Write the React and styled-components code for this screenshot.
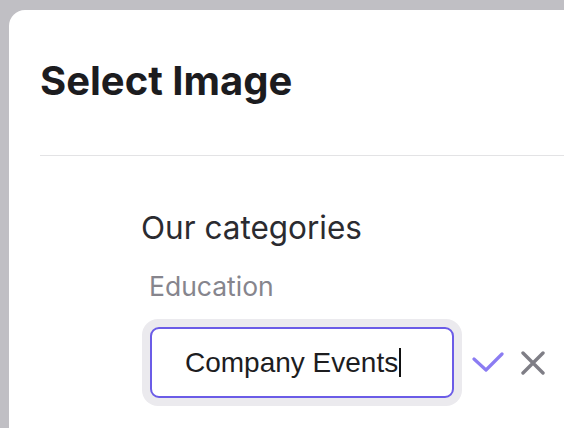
import styled, { createGlobalStyle } from "styled-components";

const GlobalStyle = createGlobalStyle`
  html, body {
    margin: 0;
    padding: 0;
    background-color: #c0bfc4;
    overflow: hidden;
  }
  body {
    font-family: "Inter", "Liberation Sans", sans-serif;
  }
`;

function CheckIcon() {
  return (
    <svg width="32" height="22" viewBox="0 0 32 22" fill="none">
      <polyline
        points="2,7 14,18 30,2"
        stroke="#8b7cf2"
        strokeWidth="3.2"
        strokeLinecap="round"
        strokeLinejoin="round"
      />
    </svg>
  );
}

function CloseIcon() {
  return (
    <svg width="24" height="24" viewBox="0 0 24 24" fill="none">
      <path
        d="M2 2 L22 22 M22 2 L2 22"
        stroke="#7f7e86"
        strokeWidth="3.4"
        strokeLinecap="round"
      />
    </svg>
  );
}

export default function App() {
  return (
    <>
      <GlobalStyle />
      <Modal>
        <Header>
          <Title>Select Image</Title>
        </Header>
        <Divider />
        <Body>
          <SectionTitle>Our categories</SectionTitle>
          <CategoryLabel>Education</CategoryLabel>
          <EditRow>
            <FocusRing>
              <Field role="textbox">
                Company Events
                <Caret />
              </Field>
            </FocusRing>
            <IconButton aria-label="Save" $gap="10px">
              <CheckIcon />
            </IconButton>
            <IconButton aria-label="Cancel" $gap="17px">
              <CloseIcon />
            </IconButton>
          </EditRow>
        </Body>
      </Modal>
    </>
  );
}

const Modal = styled.div`
  margin: 10px 0 0 9px;
  width: 620px;
  height: 480px;
  background-color: #fff;
  border-radius: 16px 0 0 0;
`;

const Header = styled.div`
  padding: 47px 31px 0;
  height: 98px;
`;

const Title = styled.h1`
  margin: 0;
  font-size: 40px;
  line-height: 48px;
  font-weight: 700;
  color: #1c1c1f;
`;

const Divider = styled.div`
  margin-left: 31px;
  height: 1px;
  background-color: #e3e3e5;
`;

const Body = styled.div`
  padding: 53px 0 0 132px;
  display: flex;
  flex-direction: column;
`;

const SectionTitle = styled.h2`
  margin: 0;
  font-size: 31.5px;
  line-height: 38px;
  font-weight: 400;
  color: #2b2b30;
`;

const CategoryLabel = styled.div`
  margin: 23px 0 0 8px;
  font-size: 26.5px;
  line-height: 32px;
  color: #86858d;
`;

const EditRow = styled.div`
  margin: 17px 0 0 1px;
  display: flex;
  align-items: center;
`;

const FocusRing = styled.div`
  padding: 8px;
  border-radius: 16px;
  background-color: #ebeaee;
`;

const Field = styled.div`
  box-sizing: border-box;
  width: 304px;
  height: 71px;
  padding-left: 33px;
  display: flex;
  align-items: center;
  border: 2px solid #6b5ce7;
  border-radius: 9px;
  background-color: #fff;
  font-family: "Liberation Sans", Arial, sans-serif;
  font-size: 28px;
  color: #1d1d1f;
`;

const Caret = styled.span`
  display: inline-block;
  width: 2px;
  height: 29px;
  margin-left: 1px;
  background-color: #111;
`;

const IconButton = styled.button`
  margin-left: ${(props) => props.$gap};
  padding: 0;
  border: none;
  background: none;
  display: flex;
  align-items: center;
  cursor: pointer;
`;
